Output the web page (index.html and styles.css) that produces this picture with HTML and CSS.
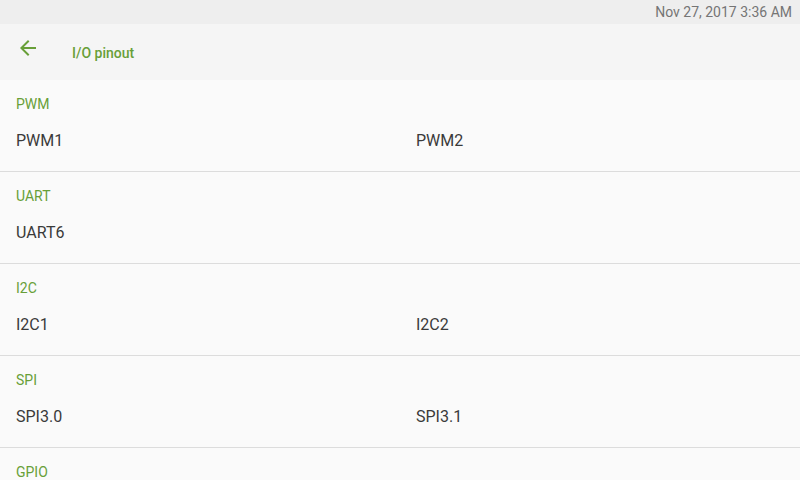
FILE: index.html
```html
<!DOCTYPE html>
<html>
<head>
<meta charset="utf-8">
<link rel="stylesheet" href="styles.css">
</head>
<body>
<div class="status">Nov 27, 2017 3:36 AM</div>
<div class="toolbar">
  <svg class="back" viewBox="0 0 24 24" width="24" height="24"><path d="M20 11H7.83l5.59-5.59L12 4l-8 8 8 8 1.41-1.41L7.83 13H20v-2z" fill="#689f38"/></svg>
  <div class="title">I/O pinout</div>
</div>
<div class="content">
  <div class="section">
    <div class="header">PWM</div>
    <div class="items"><div class="item">PWM1</div><div class="item">PWM2</div></div>
  </div>
  <div class="section">
    <div class="header">UART</div>
    <div class="items"><div class="item">UART6</div></div>
  </div>
  <div class="section">
    <div class="header">I2C</div>
    <div class="items"><div class="item">I2C1</div><div class="item">I2C2</div></div>
  </div>
  <div class="section">
    <div class="header">SPI</div>
    <div class="items"><div class="item">SPI3.0</div><div class="item">SPI3.1</div></div>
  </div>
  <div class="section">
    <div class="header">GPIO</div>
  </div>
</div>
</body>
</html>
```
FILE: styles.css
```css
html, body { margin: 0; padding: 0; }
body {
  width: 800px; height: 480px; overflow: hidden;
  background: #fafafa;
  font-family: Roboto, "Noto Sans", sans-serif;
}
.status {
  height: 24px; background: #eeeeee; color: #757575;
  font-size: 14px; line-height: 24px; text-align: right;
  padding-right: 8px;
}
.toolbar {
  height: 56px; background: #f5f5f5;
  display: flex; align-items: center;
}
.back { margin-left: 16px; margin-top: -8px; }
.title {
  margin-left: 32px; margin-top: 2px; color: #689f38; font-size: 14px; font-weight: 500;
}
.content { height: 400px; overflow: hidden; }
.section {
  height: 91px; border-bottom: 1px solid #dcdcdc;
}
.header {
  color: #689f38; font-size: 14px; padding: 16px 16px 0; line-height: 16px;
}
.items { display: grid; grid-template-columns: 400px 400px; margin-top: 19px; }
.item { padding-left: 16px; font-size: 16px; color: #3a3a3a; line-height: 20px; }
```
